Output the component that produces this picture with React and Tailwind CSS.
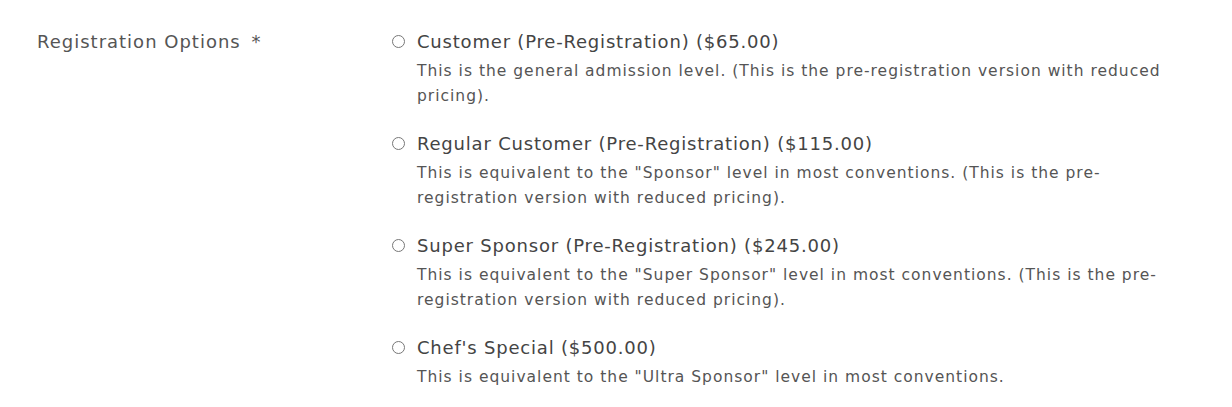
const options = [
  {
    title: 'Customer (Pre-Registration) ($65.00)',
    desc: 'This is the general admission level. (This is the pre-registration version with reduced pricing).',
  },
  {
    title: 'Regular Customer (Pre-Registration) ($115.00)',
    desc: 'This is equivalent to the "Sponsor" level in most conventions. (This is the pre-registration version with reduced pricing).',
  },
  {
    title: 'Super Sponsor (Pre-Registration) ($245.00)',
    desc: 'This is equivalent to the "Super Sponsor" level in most conventions. (This is the pre-registration version with reduced pricing).',
  },
  {
    title: "Chef's Special ($500.00)",
    desc: 'This is equivalent to the "Ultra Sponsor" level in most conventions.',
  },
];

export default function App() {
  return (
    <div className="min-h-screen bg-white text-[#4a4a4a]" style={{ fontFamily: '"DejaVu Sans", sans-serif' }}>
      <div className="flex pt-[29px] pl-[37px]">
        <div className="w-[355px] shrink-0 text-[18px] leading-[26px] tracking-[1px] text-[#555]">
          Registration Options <span className="ml-1">*</span>
        </div>
        <div className="flex flex-col gap-[22px]">
          {options.map((o) => (
            <label key={o.title} className="flex items-start gap-[12px]">
              <span className="mt-[6px] w-[13px] h-[13px] rounded-full border border-[#777] bg-white shrink-0" />
              <span className="flex flex-col">
                <span className="text-[18px] leading-[26px] tracking-[0.8px] text-[#444]">{o.title}</span>
                <span className="max-w-[760px] mt-[4px] text-[15.5px] leading-[25px] tracking-[1px] text-[#555]">{o.desc}</span>
              </span>
            </label>
          ))}
        </div>
      </div>
    </div>
  );
}
